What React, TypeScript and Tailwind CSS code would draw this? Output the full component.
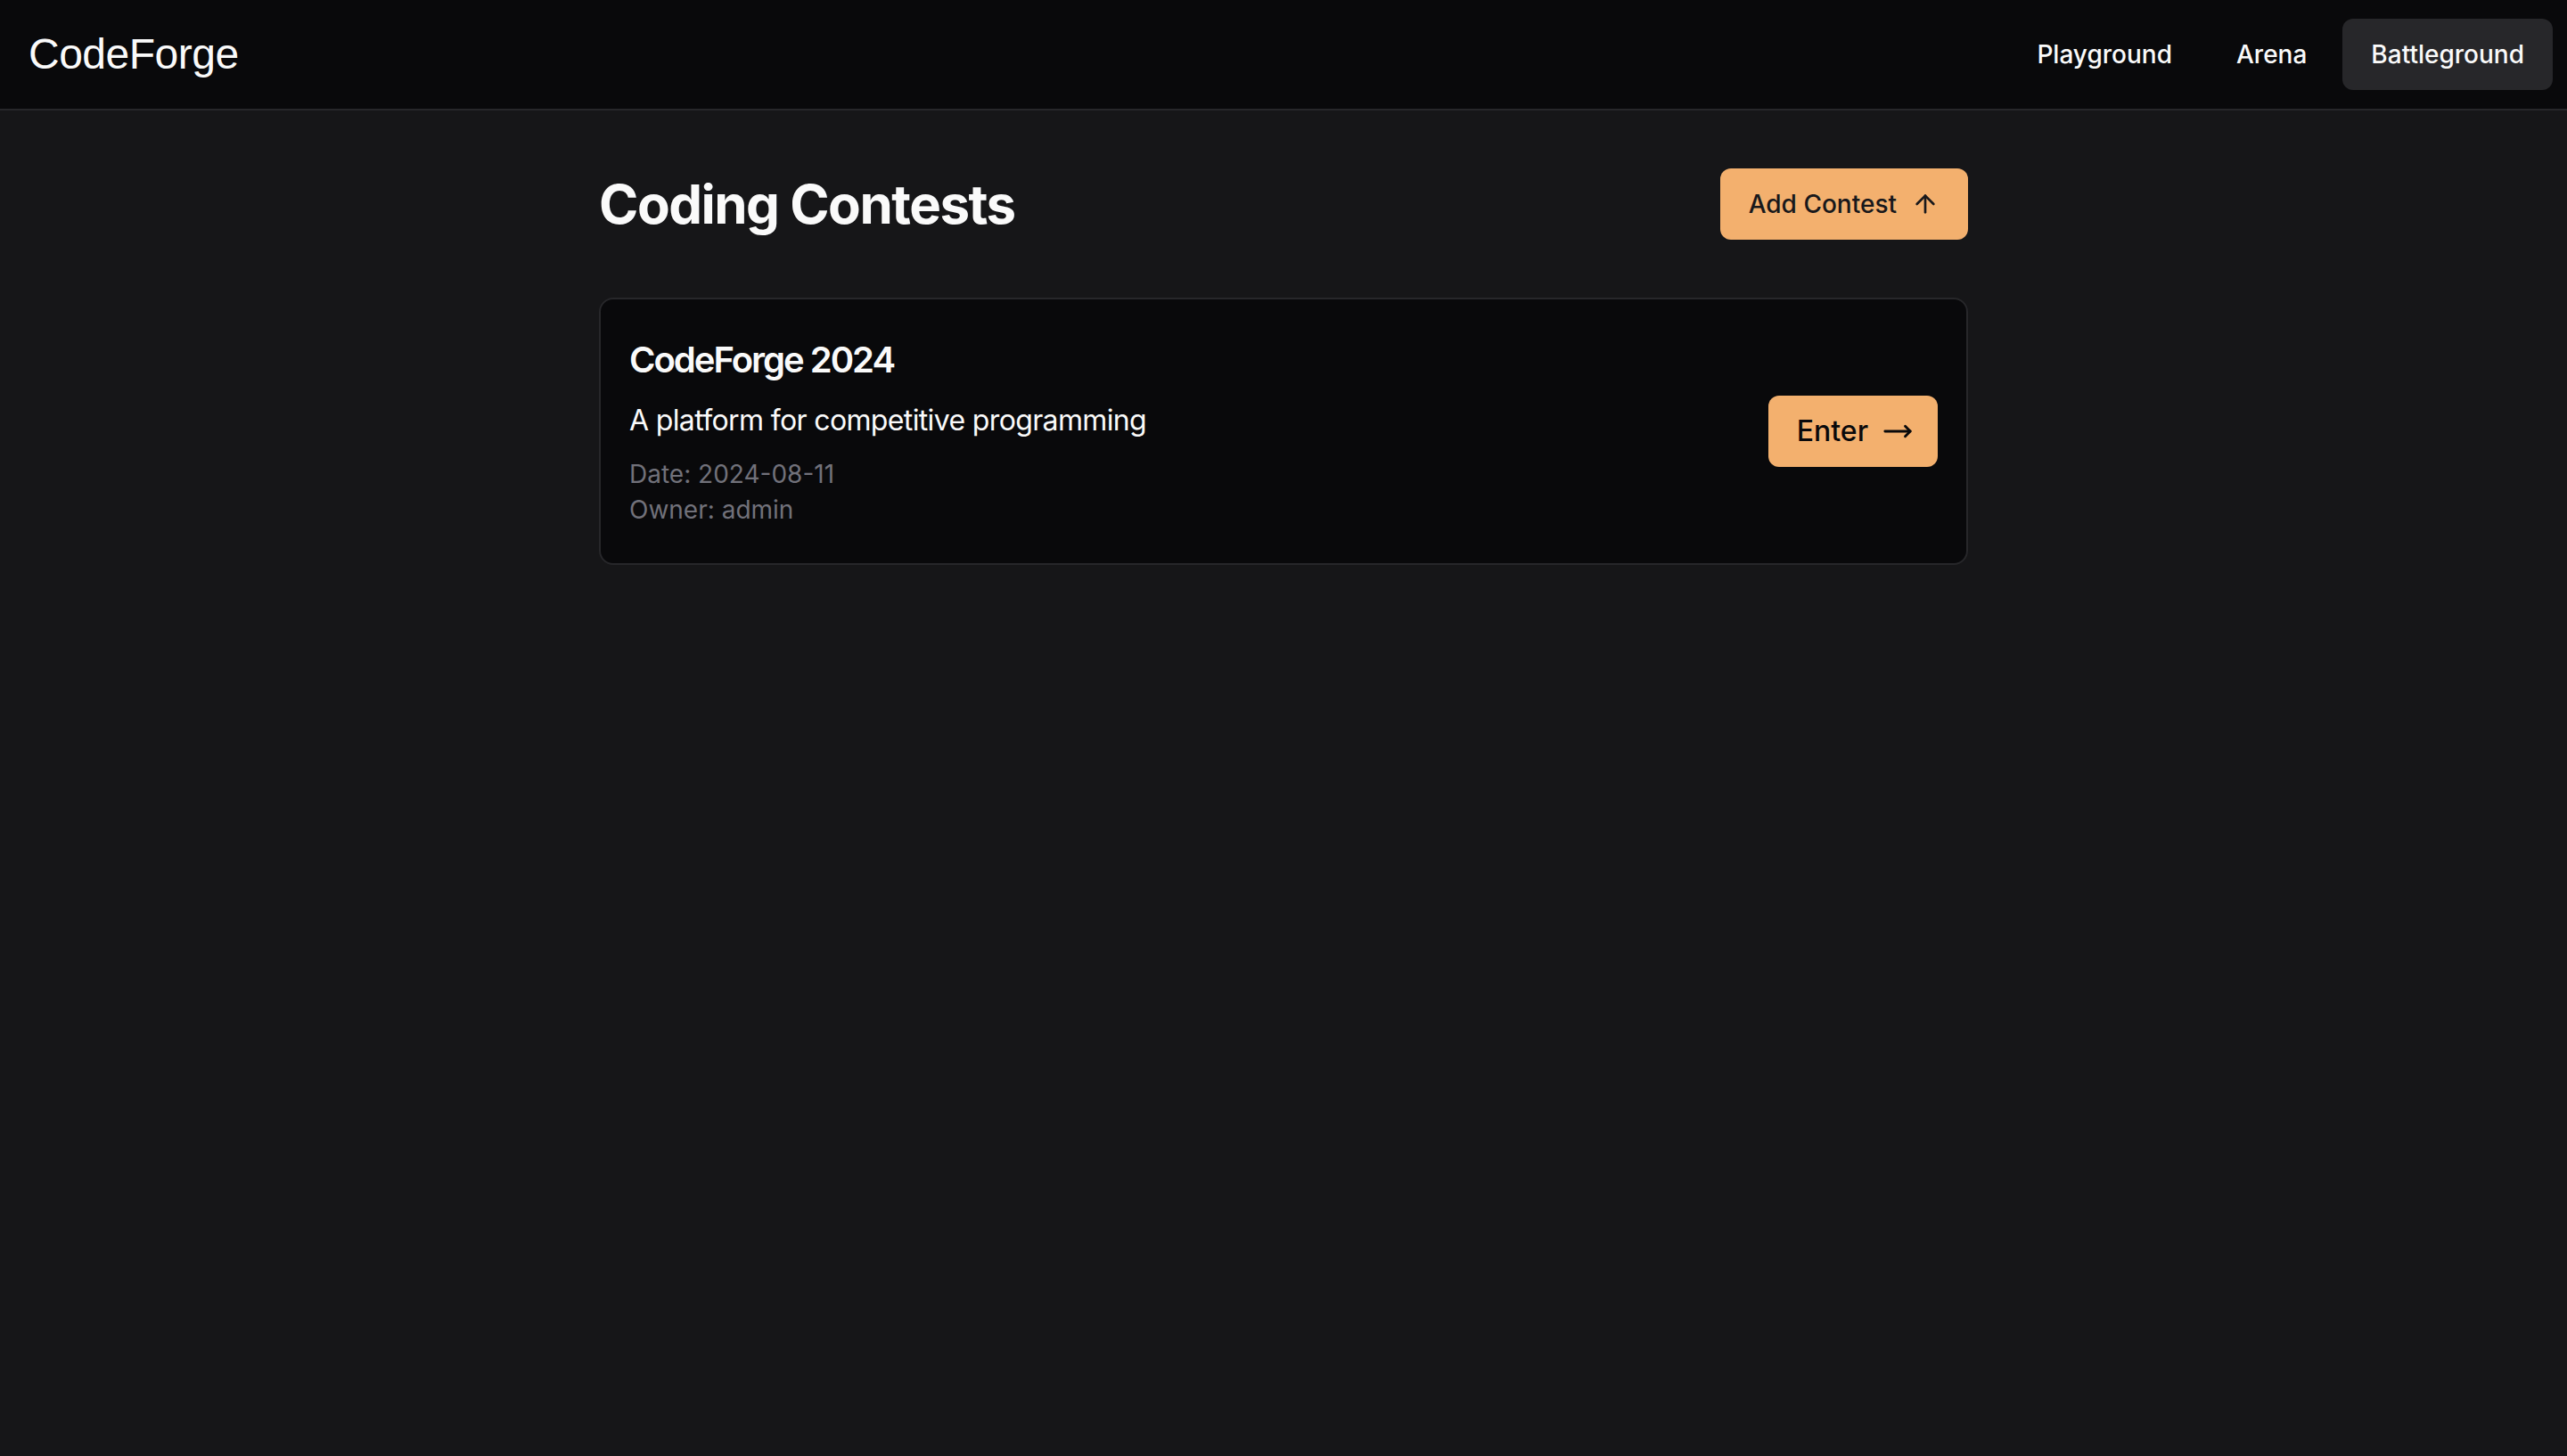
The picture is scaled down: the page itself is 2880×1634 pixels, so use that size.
import React from 'react';
import { ArrowUp, MoveRight } from 'lucide-react';

interface Contest {
  id: number;
  name: string;
  description: string;
  date: string;
  owner: string;
}

const contests: Contest[] = [
  {
    id: 1,
    name: 'CodeForge 2024',
    description: 'A platform for competitive programming',
    date: '2024-08-11',
    owner: 'admin',
  },
];

const navItems = ['Playground', 'Arena', 'Battleground'];

const Navbar: React.FC<{ active: string }> = ({ active }) => (
  <header className="flex h-[124px] items-center justify-between border-b-2 border-[#27272a] bg-[#09090b] pl-8 pr-4">
    <a href="#" className="font-['Liberation_Sans',Arial,sans-serif] text-[48px] tracking-[-0.5px] text-[#fafafa]">
      CodeForge
    </a>
    <nav className="flex items-center gap-2">
      {navItems.map(item => (
        <button
          key={item}
          className={`h-20 rounded-xl px-8 text-[28px] font-medium text-[#fafafa] ${item === active ? 'bg-[#27272a]' : 'bg-transparent'}`}
        >
          {item}
        </button>
      ))}
    </nav>
  </header>
);

const ContestCard: React.FC<{ contest: Contest }> = ({ contest }) => (
  <div className="flex items-center justify-between rounded-2xl border-2 border-[#27272a] bg-[#09090b] px-8 py-10">
    <div>
      <h2 className="text-[40px] leading-[56px] font-semibold tracking-[-0.05em] text-[#fafafa]">{contest.name}</h2>
      <p className="mt-4 text-[32px] leading-[48px] tracking-[-0.02em] text-[#fafafa]">{contest.description}</p>
      <div className="mt-4 text-[28px] leading-[40px] text-[#71717a]">
        <p>Date: {contest.date}</p>
        <p>Owner: {contest.owner}</p>
      </div>
    </div>
    <button className="flex h-20 items-center rounded-xl bg-[#f3b06e] pl-8 pr-7 text-[32px] font-medium text-[#09090b]">
      Enter
      <MoveRight size={34} strokeWidth={2} className="ml-4" />
    </button>
  </div>
);

export default function App() {
  return (
    <div className="min-h-screen bg-[#161618] font-['Inter',sans-serif]">
      <Navbar active="Battleground" />
      <main className="mx-auto w-[1536px] pt-[65px]">
        <div className="flex items-center justify-between">
          <h1 className="text-[60px] leading-[72px] font-bold tracking-tight text-[#fafafa]">Coding Contests</h1>
          <button className="flex h-20 items-center rounded-xl bg-[#f3b06e] px-8 text-[28px] font-medium text-[#18181b]">
            Add Contest
            <ArrowUp size={32} strokeWidth={2} className="ml-4" />
          </button>
        </div>
        <div className="mt-[65px] flex flex-col gap-8">
          {contests.map(c => (
            <ContestCard key={c.id} contest={c} />
          ))}
        </div>
      </main>
    </div>
  );
}
